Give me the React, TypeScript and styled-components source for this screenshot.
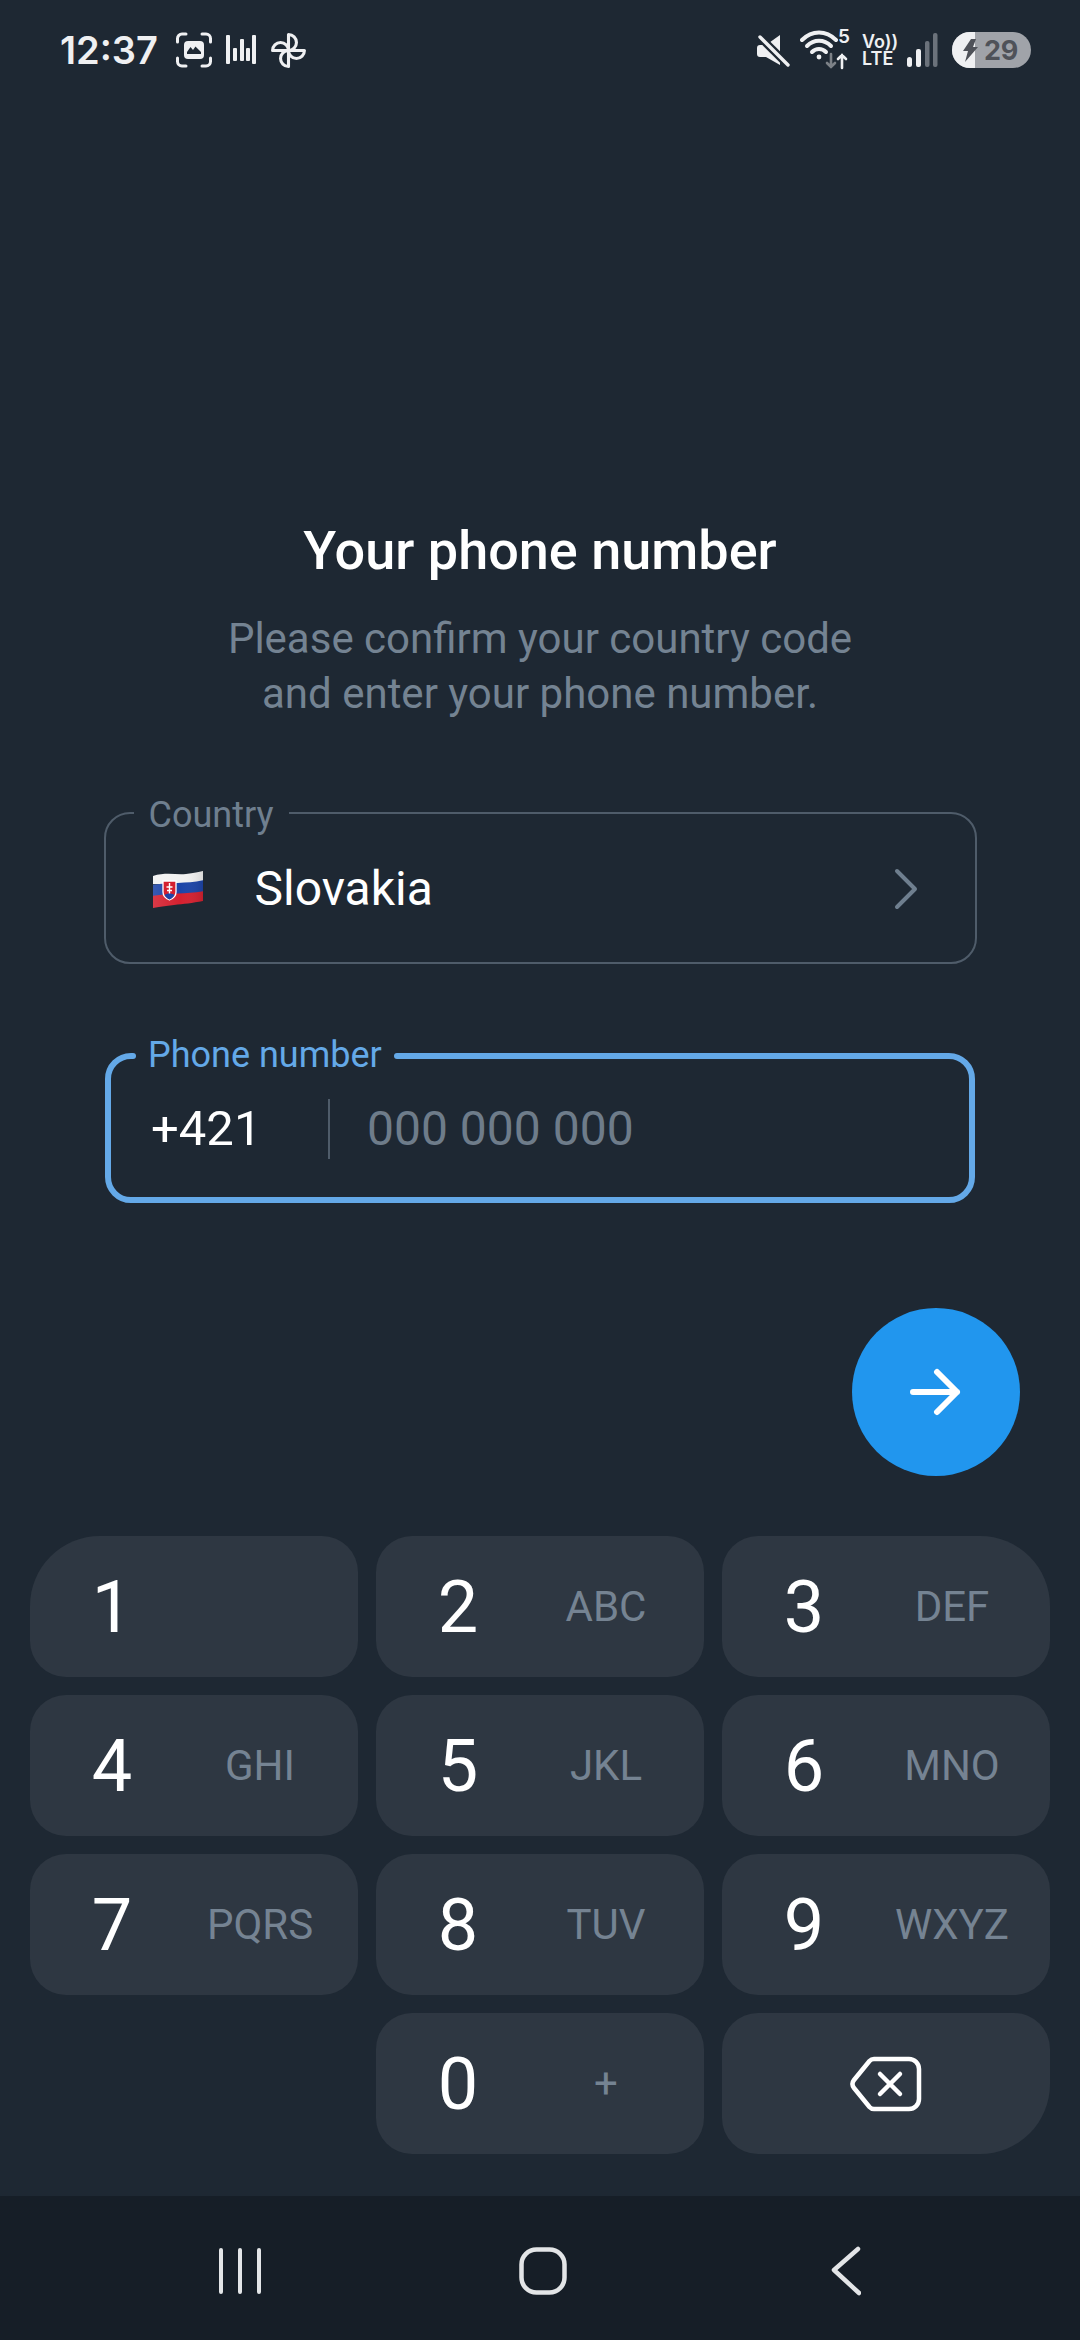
import React from "react";
import styled, { createGlobalStyle, css } from "styled-components";

const Global = createGlobalStyle`
  html, body { margin: 0; padding: 0; background: #1e2833; }
  * { box-sizing: border-box; }
`;

const Screen = styled.div`
  width: 1080px;
  height: 2340px;
  display: flex;
  flex-direction: column;
  background: #1e2833;
  font-family: Roboto, "Liberation Sans", sans-serif;
  overflow: hidden;
`;

const StatusBar = styled.div`
  height: 100px;
  padding: 0 49px 0 60px;
  display: flex;
  align-items: center;
  justify-content: space-between;
  color: #eff0f2;
`;
const StatusGroup = styled.div`
  display: flex;
  align-items: center;
`;
const Clock = styled.span`
  font-family: Inter, sans-serif;
  font-weight: 600;
  font-size: 38px;
  line-height: 40px;
  width: 116px;
`;
const StatusIcon = styled.svg<{ $gap?: number }>`
  display: block;
  margin-right: ${(p) => p.$gap ?? 0}px;
`;
const WifiBox = styled.div`
  position: relative;
  width: 50px;
  height: 40px;
  margin-right: 12px;
`;
const WifiFive = styled.span`
  position: absolute;
  top: -3px;
  right: 0;
  font-family: Inter, sans-serif;
  font-size: 19px;
  font-weight: 600;
  line-height: 20px;
`;
const VoLte = styled.div`
  width: 32px;
  margin-right: 13px;
  display: flex;
  flex-direction: column;
  font-family: Inter, sans-serif;
  font-weight: 600;
  font-size: 18px;
  line-height: 17px;
  white-space: nowrap;
`;
const Battery = styled.div`
  position: relative;
  width: 79px;
  height: 36px;
  margin-left: 14px;
  border-radius: 18px;
  overflow: hidden;
  background: #a0a3a9;
  display: flex;
  align-items: center;
  justify-content: flex-end;
  padding-right: 13px;
  color: #4f5259;
  font-family: Inter, sans-serif;
  font-weight: 700;
  font-size: 27px;
  letter-spacing: -0.3px;
`;
const BatteryFill = styled.div`
  position: absolute;
  inset: 0 auto 0 0;
  width: 23px;
  background: #eff0f2;
`;
const Bolt = styled.svg`
  position: absolute;
  left: 10px;
  top: 7px;
`;
const BatteryLevel = styled.span`
  position: relative;
`;

const Main = styled.div`
  flex: 1;
  display: flex;
  flex-direction: column;
  align-items: center;
  padding-top: 421px;
`;
const Title = styled.h1`
  margin: 0;
  font-weight: 500;
  font-size: 54px;
  line-height: 60px;
  color: #fff;
`;
const Subtitle = styled.p`
  margin: 30px 0 0;
  text-align: center;
  font-size: 42px;
  line-height: 55px;
  color: #748392;
`;
const Field = styled.div<{ $active?: boolean }>`
  position: relative;
  width: ${(p) => (p.$active ? 870 : 873)}px;
  height: ${(p) => (p.$active ? 150 : 152)}px;
  margin-top: ${(p) => (p.$active ? 89 : 91)}px;
  border: ${(p) => (p.$active ? "6px solid #64a9e8" : "2px solid #4f5c6a")};
  border-radius: 26px;
  display: flex;
  align-items: center;
  padding-left: ${(p) => (p.$active ? 40 : 46)}px;
  padding-top: 2px;
`;
const Legend = styled.span<{ $active?: boolean }>`
  position: absolute;
  top: ${(p) => (p.$active ? -26 : -21)}px;
  left: ${(p) => (p.$active ? 22 : 28)}px;
  padding: 0 15px;
  font-size: 36px;
  line-height: 44px;
  color: ${(p) => (p.$active ? "#64a9e8" : "#6f7f8f")};
  background: linear-gradient(#1e2833, #1e2833) top / 100% 34px no-repeat;
  ${(p) =>
    p.$active &&
    css`
      &::before,
      &::after {
        content: "";
        position: absolute;
        top: 20px;
        width: 6px;
        height: 6px;
        border-radius: 50%;
        background: #64a9e8;
      }
      &::before {
        left: -3px;
      }
      &::after {
        right: -3px;
      }
    `}
`;
const Value = styled.span`
  font-size: 48px;
  line-height: 54px;
  color: #fff;
`;
const CountryName = styled(Value)`
  margin-left: 51px;
  flex: 1;
`;
const Chevron = styled.svg`
  margin-right: 55px;
`;
const Prefix = styled(Value)`
  width: 177px;
  font-size: 49px;
`;
const Divider = styled.div`
  width: 2px;
  height: 60px;
  background: #4f5c6a;
  margin-right: 37px;
`;
const Placeholder = styled(Value)`
  color: #6e7c8a;
`;
const NextRow = styled.div`
  width: 100%;
  margin-top: 105px;
  padding-right: 60px;
  display: flex;
  justify-content: flex-end;
`;
const NextButton = styled.button`
  width: 168px;
  height: 168px;
  padding: 0;
  border: 0;
  border-radius: 50%;
  background: #2196ee;
  display: flex;
  align-items: center;
  justify-content: center;
`;
const Keypad = styled.div`
  margin-top: 60px;
  width: 100%;
  padding: 0 30px;
  display: grid;
  grid-template-columns: repeat(3, 328px);
  grid-auto-rows: 141px;
  gap: 18px;
`;
const Key = styled.div<{ $corner?: "tl" | "tr" | "br" }>`
  display: grid;
  grid-template-columns: 164px 132px;
  align-items: center;
  justify-items: center;
  background: #2e3742;
  border-radius: ${(p) =>
    p.$corner === "tl"
      ? "70px 36px 36px 36px"
      : p.$corner === "tr"
      ? "36px 70px 36px 36px"
      : p.$corner === "br"
      ? "36px 36px 70px 36px"
      : "36px"};
`;
const IconKey = styled(Key)`
  display: flex;
  justify-content: center;
`;
const EmptyKey = styled.div``;
const Digit = styled.span`
  font-size: 72px;
  line-height: 84px;
  padding-top: 3px;
  color: #fff;
`;
const Letters = styled.span`
  font-size: 42px;
  line-height: 48px;
  color: #758392;
`;
const NavBar = styled.div`
  height: 144px;
  flex: none;
  background: #161e27;
  display: grid;
  grid-template-columns: repeat(3, 303px);
  justify-content: center;
  justify-items: center;
  align-items: center;
  padding: 6px 0 0 6px;
`;

const keys: { d: string; l?: string; c?: "tl" | "tr" }[] = [
  { d: "1", c: "tl" },
  { d: "2", l: "ABC" },
  { d: "3", l: "DEF", c: "tr" },
  { d: "4", l: "GHI" },
  { d: "5", l: "JKL" },
  { d: "6", l: "MNO" },
  { d: "7", l: "PQRS" },
  { d: "8", l: "TUV" },
  { d: "9", l: "WXYZ" },
];

const Flag = () => (
  <svg width="52" height="40" viewBox="0 0 52 40">
    <defs>
      <clipPath id="wave">
        <path d="M1 7 C14 3 24 6 34 5 C42 4 47 3 51 2 V32 C40 34 32 35 22 36 C14 37 6 38 1 39 Z" />
      </clipPath>
      <linearGradient id="sheen" x1="0" x2="1" y1="0" y2="0">
        <stop offset="0" stopColor="#fff" stopOpacity="0.12" />
        <stop offset="0.55" stopColor="#fff" stopOpacity="0" />
        <stop offset="1" stopColor="#000" stopOpacity="0.12" />
      </linearGradient>
    </defs>
    <g clipPath="url(#wave)">
      <rect width="52" height="15" fill="#f2f2f2" />
      <path d="M0 16 C18 13 34 15 52 11 V23 C34 26 18 25 0 28 Z" fill="#1c44a8" />
      <path d="M0 27 C18 24 34 25 52 22 V40 H0 Z" fill="#d5202f" />
      <rect width="52" height="40" fill="url(#sheen)" />
    </g>
    <path d="M11 12 H24 V23 C24 28 20 30 17.5 31 C15 30 11 28 11 23 Z" fill="#d5202f" stroke="#fff" strokeWidth="1.3" />
    <path d="M17.5 14 V26 M14.5 18 H20.5 M15 21.5 H20" stroke="#fff" strokeWidth="1.4" />
    <path d="M12.5 26 C15 24 20 24 22.5 26 C21 28.5 19 30 17.5 30.4 C16 30 14 28.5 12.5 26 Z" fill="#1c44a8" />
  </svg>
);

const petal = "M18 18 H33.5 A7.75 7.75 0 0 1 18 18 Z";

export default function App() {
  return (
    <>
      <Global />
      <Screen>
        <StatusBar>
          <StatusGroup>
            <Clock>12:37</Clock>
            <StatusIcon width="36" height="36" viewBox="0 0 36 36" $gap={13} fill="none">
              <path d="M10 2 H6 A4.5 4.5 0 0 0 1.5 6.5 V10 M26 2 H30 A4.5 4.5 0 0 1 34.5 6.5 V10 M10 34 H6 A4.5 4.5 0 0 1 1.5 29.5 V26 M26 34 H30 A4.5 4.5 0 0 0 34.5 29.5 V26" stroke="#eff0f2" strokeWidth="3" strokeLinecap="round" />
              <rect x="8" y="9" width="20" height="18" rx="4" fill="#eff0f2" />
              <path d="M11 20 L14.5 15 L17 18 L19.5 14.5 L25 20 V22 H11 Z" fill="#1e2833" />
            </StatusIcon>
            <StatusIcon width="32" height="30" viewBox="0 0 32 30" $gap={13} fill="#eff0f2">
              <rect x="1" y="0" width="4" height="29" rx="1" />
              <rect x="8" y="13" width="4" height="13" rx="1" />
              <rect x="15" y="4" width="4" height="22" rx="1" />
              <rect x="21" y="13" width="4" height="13" rx="1" />
              <rect x="27" y="0" width="4" height="29" rx="1" />
            </StatusIcon>
            <StatusIcon width="37" height="37" viewBox="0 0 36 36" fill="none" stroke="#eff0f2" strokeWidth="3" strokeLinejoin="round">
              <path d={petal} />
              <path d={petal} transform="rotate(90 18 18)" />
              <path d={petal} transform="rotate(180 18 18)" />
              <path d={petal} transform="rotate(270 18 18)" />
            </StatusIcon>
          </StatusGroup>
          <StatusGroup>
            <StatusIcon width="33" height="33" viewBox="0 0 33 33" $gap={10} fill="#eff0f2">
              <path d="M0 14 A3 3 0 0 1 3 11 H9 L23 1 V31 L9 23 H3 A3 3 0 0 1 0 20 Z" />
              <path d="M3 3 L31 31" stroke="#1e2833" strokeWidth="8" />
              <path d="M3 3 L31 31" stroke="#eff0f2" strokeWidth="3.4" strokeLinecap="round" />
            </StatusIcon>
            <WifiBox>
              <StatusIcon width="50" height="40" viewBox="0 0 50 40" fill="none" stroke="#eff0f2" strokeWidth="4" strokeLinecap="round">
                <path d="M2 10 C12 0 26 0 36 10" />
                <path d="M7 16 C14 9 24 9 31 16" />
                <path d="M12 22 C16 18 22 18 26 22" />
                <circle cx="19" cy="27" r="2.4" fill="#eff0f2" stroke="none" />
                <path d="M31 24 V37 M27 33 L31 37 L35 33" stroke="#7c8187" strokeWidth="2.6" />
                <path d="M42 38 V25 M38 29 L42 25 L46 29" strokeWidth="2.6" />
              </StatusIcon>
              <WifiFive>5</WifiFive>
            </WifiBox>
            <VoLte>
              <span>Vo))</span>
              <span>LTE</span>
            </VoLte>
            <StatusIcon width="31" height="34" viewBox="0 0 31 34" fill="#eff0f2">
              <rect x="0" y="24" width="5" height="10" rx="2.5" />
              <rect x="9" y="16" width="5" height="18" rx="2" />
              <rect x="18" y="8" width="4.5" height="26" rx="2" fill="#6b727b" />
              <rect x="26" y="0" width="4.5" height="34" rx="2" fill="#6b727b" />
            </StatusIcon>
            <Battery>
              <BatteryFill />
              <Bolt width="16" height="23" viewBox="0 0 16 23" fill="#4f5259">
                <path d="M9 0 H14 L11 8 H16 L3 23 L6 12 H1 Z" />
              </Bolt>
              <BatteryLevel>29</BatteryLevel>
            </Battery>
          </StatusGroup>
        </StatusBar>

        <Main>
          <Title>Your phone number</Title>
          <Subtitle>
            Please confirm your country code
            <br />
            and enter your phone number.
          </Subtitle>
          <Field>
            <Legend>Country</Legend>
            <Flag />
            <CountryName>Slovakia</CountryName>
            <Chevron width="28" height="44" viewBox="0 0 28 44" fill="none" stroke="#6f7f8f" strokeWidth="4" strokeLinecap="round" strokeLinejoin="round">
              <path d="M5 4 L23 22 L5 40" />
            </Chevron>
          </Field>
          <Field $active>
            <Legend $active>Phone number</Legend>
            <Prefix>+421</Prefix>
            <Divider />
            <Placeholder>000 000 000</Placeholder>
          </Field>
          <NextRow>
            <NextButton aria-label="Next">
              <svg width="52" height="48" viewBox="0 0 52 48" fill="none" stroke="#fff" strokeWidth="6" strokeLinecap="round" strokeLinejoin="round">
                <path d="M3 24 H47 M27 4 L47 24 L27 44" />
              </svg>
            </NextButton>
          </NextRow>
          <Keypad>
            {keys.map((k) => (
              <Key key={k.d} $corner={k.c}>
                <Digit>{k.d}</Digit>
                {k.l && <Letters>{k.l}</Letters>}
              </Key>
            ))}
            <EmptyKey />
            <Key>
              <Digit>0</Digit>
              <Letters>+</Letters>
            </Key>
            <IconKey $corner="br">
              <svg width="72" height="56" viewBox="0 0 72 56" fill="none" stroke="#fff" strokeLinecap="round" strokeLinejoin="round">
                <path d="M24 3 H59 A10 10 0 0 1 69 13 V43 A10 10 0 0 1 59 53 H24 A6 6 0 0 1 19.5 51 L4 32 A6.5 6.5 0 0 1 4 24 L19.5 5 A6 6 0 0 1 24 3 Z" strokeWidth="4.5" />
                <path d="M30 18 L50 38 M50 18 L30 38" strokeWidth="4.5" />
              </svg>
            </IconKey>
          </Keypad>
        </Main>

        <NavBar>
          <svg width="44" height="46" viewBox="0 0 44 46" stroke="#e3e5e7" strokeWidth="4" strokeLinecap="round">
            <path d="M3 2 V44 M22 2 V44 M41 2 V44" />
          </svg>
          <svg width="48" height="48" viewBox="0 0 48 48" fill="none" stroke="#e3e5e7" strokeWidth="4.5">
            <rect x="2.5" y="2.5" width="43" height="43" rx="15" />
          </svg>
          <svg width="30" height="50" viewBox="0 0 30 50" fill="none" stroke="#e3e5e7" strokeWidth="4.5" strokeLinecap="round" strokeLinejoin="round">
            <path d="M27 3 L3 24 L28 47" />
          </svg>
        </NavBar>
      </Screen>
    </>
  );
}
